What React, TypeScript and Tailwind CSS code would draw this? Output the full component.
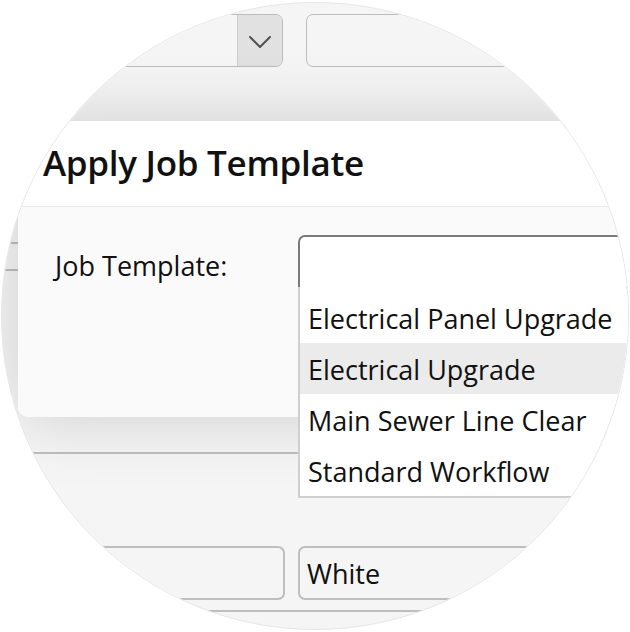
const options = [
  "Electrical Panel Upgrade",
  "Electrical Upgrade",
  "Main Sewer Line Clear",
  "Standard Workflow",
];

const HIGHLIGHTED = 1;

export default function App() {
  return (
    <div
      className="w-[630px] h-[632px] bg-white pt-[2px] pl-[1px]"
      style={{ fontFamily: '"Open Sans", "Noto Sans", sans-serif' }}
    >
      {/* magnifier lens */}
      <div className="relative w-[628px] h-[628px] rounded-full border border-[#e6e6e6] overflow-hidden bg-white">
        {/* page behind the dialog */}
        <div className="flex flex-col pt-[11px]">
          <div className="flex h-[53px] gap-[23px]">
            <div className="flex w-[281px] shrink-0 rounded-r-[7px] border border-[#c4c4c4] bg-white overflow-hidden">
              <div className="flex-1" />
              <div className="flex w-[45px] items-center justify-center border-l border-[#d6d6d6] bg-[#ebebeb] pt-[2px]">
                <svg width="22" height="12" viewBox="0 0 22 12" fill="none">
                  <polyline points="1,1 11,11 21,1" stroke="#555" strokeWidth="2" strokeLinecap="round" strokeLinejoin="round" />
                </svg>
              </div>
            </div>
            <div className="flex-1 -mr-10 rounded-l-[7px] border border-[#c4c4c4] bg-white" />
          </div>

          <div className="mt-[175px] h-[29px] border-y-2 border-[#c6c6c6]" />
          <div className="mt-[181px] border-t-2 border-[#c6c6c6]" />

          <div className="mt-[92px] flex h-[54px] gap-[13px]">
            <div className="w-[283px] shrink-0 rounded-r-[7px] border-2 border-[#c6c6c6] bg-white" />
            <div className="flex flex-1 -mr-10 items-center rounded-l-[7px] border-2 border-[#c6c6c6] bg-white pl-[7px] pt-[2px] text-[27px] text-[#111]">
              White
            </div>
          </div>
          <div className="mt-[10px] border-t-2 border-[#c6c6c6]" />
        </div>

        {/* dim overlay */}
        <div className="absolute inset-0 bg-black/[0.04]" />

        {/* dialog */}
        <div className="absolute left-[16px] top-[118px] w-[720px] shadow-[0_0_70px_rgba(0,0,0,0.16)] rounded-bl-[10px]">
          <div className="flex h-[86px] items-center border-b border-[#eaeaea] bg-white pl-[25px]">
            <h2 className="text-[35px] font-semibold text-[#111] tracking-[-0.3px]">Apply Job Template</h2>
          </div>
          <div className="flex h-[210px] items-start rounded-bl-[10px] bg-[#fafafa] pl-[37px] pt-[28px]">
            <div className="flex h-[54px] w-[243px] items-center pt-[8px] text-[27px] text-[#111]">Job Template:</div>
            <div className="relative h-[54px] w-[400px] rounded-tl-[7px] border-2 border-[#7a7a7a] bg-white">
              <ul className="absolute left-[-2px] top-full w-[400px] border-l-2 border-b-2 border-[#cfcfcf] bg-white pt-[5px]">
                {options.map((o, i) => (
                  <li
                    key={o}
                    className={`flex h-[51px] items-center pl-[8px] pt-[3px] text-[27px] text-[#111] ${
                      i === HIGHLIGHTED ? "bg-[#ebebeb]" : ""
                    }`}
                  >
                    {o}
                  </li>
                ))}
              </ul>
            </div>
          </div>
        </div>
      </div>
    </div>
  );
}
